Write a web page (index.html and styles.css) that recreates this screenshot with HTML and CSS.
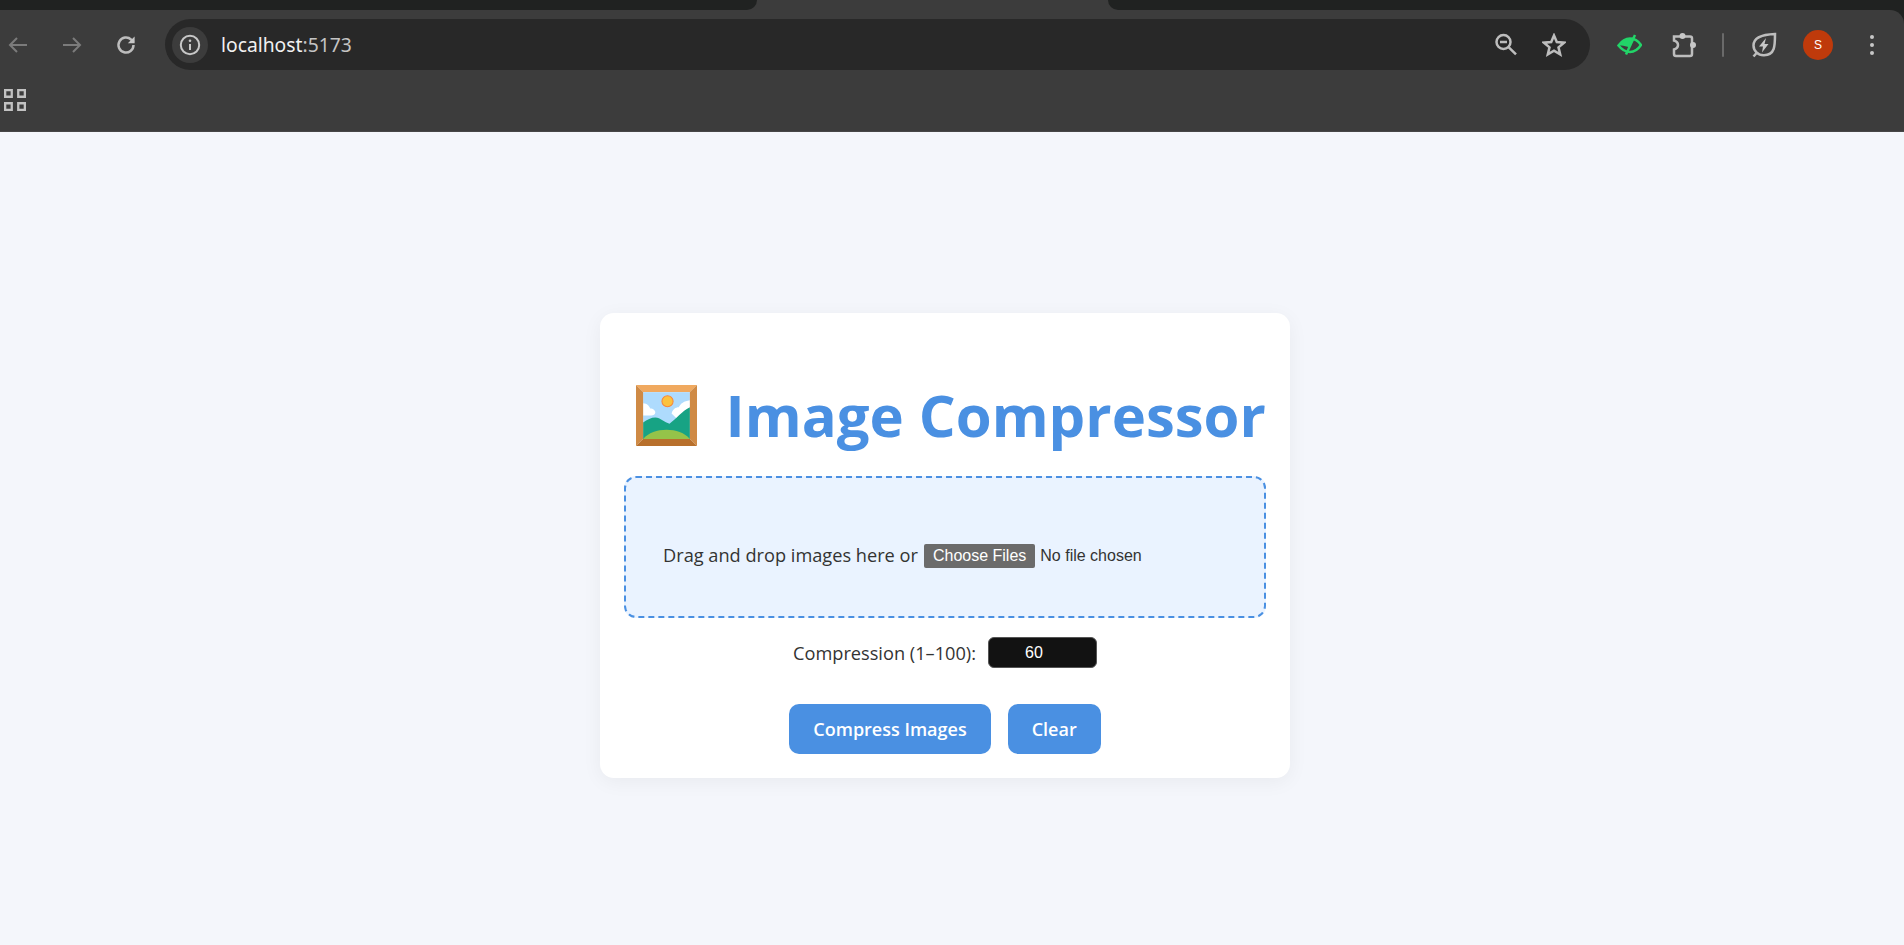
FILE: index.html
```html
<!DOCTYPE html>
<html lang="en">
<head>
    <meta charset="UTF-8">
    <meta name="viewport" content="width=device-width, initial-scale=1.0">
    <title>Image Compressor</title>
    <link rel="stylesheet" href="styles.css">
</head>
<body>
    <header class="browser">
        <div class="tab-strip">
            <div class="strip-left"></div>
            <div class="strip-right"></div>
        </div>
        <div class="toolbar-wrap">
            <div class="toolbar">
                <span class="tool">
                    <svg viewBox="0 0 24 24" width="24" height="24"><path class="stroke-off" d="M21 12H4M11 5l-7 7 7 7"/></svg>
                </span>
                <span class="tool">
                    <svg viewBox="0 0 24 24" width="24" height="24"><path class="stroke-off" d="M3 12h17M13 5l7 7-7 7"/></svg>
                </span>
                <span class="tool">
                    <svg viewBox="0 0 24 24" width="24" height="24"><path class="stroke-on thick" d="M19.5 12a7.5 7.5 0 1 1-2.3-5.4L19.5 9"/><path class="fill-on" d="M20.6 3.4v6.8h-6.8z"/></svg>
                </span>
                <div class="omnibox">
                    <span class="info-chip">
                        <svg viewBox="0 0 24 24" width="24" height="24"><circle class="stroke-on" cx="12" cy="12" r="9.2"/><path class="stroke-on" d="M12 11v6"/><circle class="fill-on" cx="12" cy="7.8" r="1.3"/></svg>
                    </span>
                    <span class="url">localhost<span class="url-port">:5173</span></span>
                    <span class="omni-icons">
                        <svg viewBox="0 0 24 24" width="24" height="24"><circle class="stroke-on thick" cx="9.5" cy="9" r="7"/><path class="stroke-on thick" d="M6 9h7M14.800 14.300l7.200 7"/></svg>
                        <svg viewBox="0 0 24 24" width="24" height="24"><path class="stroke-on thick" d="M12 2.500l2.800 6.600 7.200.6-5.500 4.700 1.700 7-6.200-3.700-6.200 3.700 1.700-7L2 9.700l7.200-.6z"/></svg>
                    </span>
                </div>
                <span class="tool">
                    <svg viewBox="0 0 26 24" width="26" height="24"><path class="stroke-eye" d="M2.500 12.500C6 7.500 10 5.500 14 5.500S22 7.500 25 12C22 16.500 18 19 14 19S6 17 2.500 12.500z"/><path class="fill-eye" d="M3 12C6 8 11 5 18 4.500L13.500 14.500C11 13.500 8 12.500 5 12.500z"/><path class="stroke-eye" d="M19 2L10 21.500"/></svg>
                </span>
                <span class="tool">
                    <svg class="puzzle" viewBox="0 0 26 26" width="26" height="26"><path class="stroke-on thick" d="M3 4.500H19a2 2 0 0 1 2 2V22a2 2 0 0 1-2 2H5a2 2 0 0 1-2-2v-4.500c3-1 4-3 4-4.500S6 9.500 3 8.500z"/><circle class="fill-on" cx="11.500" cy="4" r="3"/><circle class="fill-on" cx="22" cy="13" r="3"/></svg>
                </span>
                <span class="tool-sep"></span>
                <span class="tool">
                    <svg viewBox="0 0 26 26" width="26" height="26"><path class="stroke-on thick" d="M24 2C24 14 24 23 13 23.200C7 23.400 2.500 18.500 2.500 13.500C2.500 6 10 2.500 24 2zM6 20.500l-3.500 4"/><path class="fill-on" d="M15 6l-7 8.500h4l-1 6 6.500-8.500h-4z"/></svg>
                </span>
                <span class="tool">
                    <span class="avatar">S</span>
                </span>
                <span class="tool">
                    <span class="dots"><i></i><i></i><i></i></span>
                </span>
            </div>
            <div class="bookmarks">
                <svg viewBox="0 0 21 21" width="22" height="22"><path class="stroke-apps" d="M1.100 1.100h6.300v6.300H1.100zM13.600 1.100h6.300v6.300h-6.300zM1.100 13.600h6.300v6.300H1.100zM13.600 13.600h6.300v6.300h-6.300z"/></svg>
            </div>
        </div>
    </header>

    <main class="page">
        <div class="card">
            <h1 class="title">
                <svg class="title-pic" viewBox="0 0 60 60" width="61" height="61">
                    <rect x="7" y="7" width="46" height="46" fill="#aedbfd"/>
                    <circle cx="31" cy="16" r="5.500" fill="#fcc23d" stroke="#f7863a" stroke-width="1"/>
                    <path fill="#fff" d="M7 18c4 0 6 3 7 5 3 0 5 2 5 4 0 2-2 3-4 3H7z"/>
                    <path fill="#fff" d="M53 15c-6 1-9 3-11 7-3 0-6 2-7 6l5 5 13-10z"/>
                    <path fill="#17a384" d="M7 37c4-3 8-5 12-5 5 0 9 5 14 6 6-4 13-13 20-16v31H7z"/>
                    <path fill="#95c349" d="M7 53c5-6 14-9 23-9 9 0 18 3 23 9z"/>
                    <path fill="#f0a95f" d="M0 0h60l-7 7H7z"/>
                    <path fill="#cf8a45" d="M0 0l7 7v46l-7 7zM60 0l-7 7v46l7 7z"/>
                    <path fill="#b8702c" d="M0 60l7-7h46l7 7z"/>
                </svg>
                <span class="title-text">Image Compressor</span>
            </h1>

            <div class="dropzone">
                <span class="drop-text">Drag and drop images here or</span>
                <input class="file-input" type="file" multiple accept="image/*">
            </div>

            <div class="quality-row">
                <label class="quality-label" for="quality">Compression (1–100):</label>
                <input class="quality-input" id="quality" type="number" min="1" max="100" value="60">
            </div>

            <div class="actions">
                <button class="btn" type="button">Compress Images</button>
                <button class="btn" type="button">Clear</button>
            </div>
        </div>
    </main>
</body>
</html>
```

FILE: styles.css
```css
html, body {
    height: 100%;
}
body {
    margin: 0;
    display: flex;
    flex-direction: column;
    overflow: hidden;
    background-color: #f4f6fb;
    font-family: "Open Sans", "Noto Sans", sans-serif;
    color: #333;
}

/* browser chrome */
.browser {
    background-color: #202221;
    flex-shrink: 0;
}
.tab-strip {
    display: flex;
    justify-content: space-between;
    height: 10px;
    background-color: #3c3c3c;
}
.strip-left {
    width: 757px;
    background-color: #202221;
    border-bottom-right-radius: 12px;
}
.strip-right {
    width: 796px;
    background-color: #202221;
    border-bottom-left-radius: 12px;
}
.toolbar-wrap {
    background-color: #3c3c3c;
    border-top-right-radius: 14px;
    border-bottom: 1px solid #474747;
}
.toolbar {
    display: flex;
    align-items: center;
    gap: 18px;
    height: 51px;
    padding: 9px 14px 0 0;
}
.tool {
    display: flex;
    align-items: center;
    justify-content: center;
    width: 36px;
    height: 36px;
    flex-shrink: 0;
}
.tool-sep {
    width: 2px;
    height: 24px;
    margin: 0 4px 0 3px;
    background-color: #6a6a6a;
    border-radius: 1px;
    flex-shrink: 0;
}
.omnibox {
    display: flex;
    align-items: center;
    flex: 1;
    height: 51px;
    margin: 0 3px;
    padding: 0 24px 0 7px;
    background-color: #282828;
    border-radius: 26px;
}
.info-chip {
    display: flex;
    align-items: center;
    justify-content: center;
    width: 36px;
    height: 36px;
    border-radius: 50%;
    background-color: #3c3c3c;
}
.url {
    margin-left: 13px;
    font-family: "Noto Sans", sans-serif;
    font-size: 19.3px;
    color: #f1f1f1;
}
.url-port {
    color: #c4c4c4;
}
.omni-icons {
    display: flex;
    align-items: center;
    gap: 24px;
    margin-left: auto;
}
.stroke-off, .stroke-on, .stroke-eye, .stroke-apps {
    fill: none;
    stroke-width: 2;
}
.stroke-off {
    stroke: #7b7b7b;
}
.stroke-on {
    stroke: #c7c7c7;
}
.stroke-on.thick {
    stroke: #bdbdbd;
    stroke-width: 2.5;
}
.fill-on {
    fill: #c7c7c7;
}
.stroke-eye {
    stroke: #22d468;
    stroke-width: 2.500;
}
.fill-eye {
    fill: #22d468;
}
.stroke-apps {
    stroke: #c2c2c2;
    stroke-width: 2.200;
}
.puzzle {
    margin-left: 2px;
}
.avatar {
    display: flex;
    align-items: center;
    justify-content: center;
    width: 30px;
    height: 30px;
    border-radius: 50%;
    background-color: #bf3a0b;
    color: #fff;
    font-family: "Liberation Sans", sans-serif;
    font-size: 12px;
}
.dots {
    display: flex;
    flex-direction: column;
    gap: 4px;
}
.dots i {
    display: block;
    width: 4px;
    height: 4px;
    border-radius: 50%;
    background-color: #c7c7c7;
}
.bookmarks {
    display: flex;
    align-items: center;
    box-sizing: border-box;
    height: 61px;
    padding: 0 0 2px 4px;
}

/* page */
.page {
    flex: 1;
    display: flex;
    justify-content: center;
    padding: 181px 14px 0 0;
}
.card {
    width: 690px;
    height: 465px;
    box-sizing: border-box;
    padding: 24px;
    background-color: #fff;
    border-radius: 14px;
    box-shadow: 0 4px 20px rgba(0, 0, 0, 0.05);
}
.title {
    display: flex;
    align-items: center;
    margin: 38px 0 21px;
    padding-left: 12px;
    height: 80px;
    font-size: 58px;
    font-weight: 700;
    white-space: nowrap;
    color: #4a90e2;
}
.title-pic {
    margin-right: 28.500px;
    flex-shrink: 0;
}
.title-text {
    padding-bottom: 2px;
}
.dropzone {
    display: flex;
    align-items: center;
    gap: 6px;
    box-sizing: border-box;
    height: 142px;
    padding: 17px 37px 0;
    background-color: #eaf3ff;
    border: 2px dashed #4a90e2;
    border-radius: 12px;
}
.drop-text {
    margin-bottom: 2px;
    font-size: 18.2px;
    white-space: nowrap;
    flex-shrink: 0;
}
.file-input {
    color-scheme: dark;
    color: #333;
    font-family: "Liberation Sans", sans-serif;
    font-size: 16px;
}
.file-input::file-selector-button {
    height: 24px;
    padding: 0 9px;
    margin-right: 5px;
    background-color: #6b6b6b;
    border: none;
    border-radius: 2px;
    color: #fff;
    font-family: "Liberation Sans", sans-serif;
    font-size: 16px;
}
.quality-row {
    display: flex;
    align-items: center;
    justify-content: center;
    gap: 12px;
    margin-top: 19px;
}
.quality-label {
    font-size: 18.2px;
}
.quality-input {
    color-scheme: dark;
    box-sizing: border-box;
    width: 109px;
    height: 31px;
    padding-right: 4px;
    background-color: #121212;
    border: 1px solid #555;
    border-radius: 6px;
    color: #fff;
    text-align: center;
    font-family: "Liberation Sans", sans-serif;
    font-size: 16px;
}
.actions {
    display: flex;
    justify-content: center;
    gap: 17px;
    margin-top: 36px;
}
.btn {
    height: 50px;
    padding: 0 24px;
    background-color: #4a90e2;
    border: none;
    border-radius: 10px;
    color: #fff;
    font-family: "Open Sans", "Noto Sans", sans-serif;
    font-size: 18px;
    font-weight: 600;
}
```
